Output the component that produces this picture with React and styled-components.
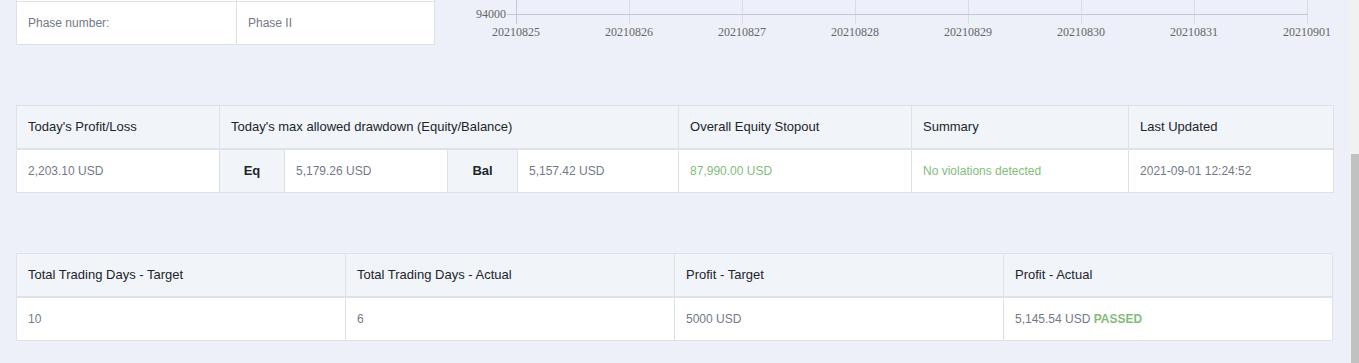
import React from "react";
import styled, { createGlobalStyle } from "styled-components";

const Global = createGlobalStyle`
  html, body { margin: 0; padding: 0; background: #edf0f8; overflow: hidden; }
  body { font-family: "Liberation Sans", Arial, sans-serif; font-size: 12px; }
`;

const C = {
  border: "#dee2e6",
  head: "#f1f4f9",
  dark: "#212529",
  muted: "#747988",
  green: "#85bb7c",
};

const Page = styled.div`
  padding: 0 26px 0 16px;
  box-sizing: border-box;
  width: 100%;
  height: 363px;
`;

const TopRow = styled.div`
  display: flex;
  align-items: flex-start;
  gap: 25px;
  height: 45px;
`;

const InfoCard = styled.div`
  flex: none;
  width: 419px;
  box-sizing: border-box;
  display: grid;
  grid-template-columns: 220px 1fr;
  border: 1px solid ${C.border};
  border-top: 0;
  background: #fff;
`;

const InfoCell = styled.div`
  padding: 14px 11px 12px;
  line-height: 18px;
  color: ${C.muted};
  background: linear-gradient(${C.border}, ${C.border}) 0 1px / 100% 1px no-repeat, #fff;
  border-right: ${(p) => (p.$divider ? `1px solid ${C.border}` : "0")};
`;

const ChartSvg = styled.svg`
  flex: none;
  display: block;
  overflow: visible;
  font-family: "Liberation Serif", "Times New Roman", serif;
  font-size: 12px;
`;

const Section = styled.div`
  margin-top: ${(p) => p.$gap}px;
`;

const Table = styled.table`
  width: 100%;
  border-collapse: collapse;
  table-layout: fixed;
  background: #fff;
`;

const Col = styled.col`
  width: ${(p) => p.$w}px;
`;

const Th = styled.th`
  text-align: left;
  font-weight: 400;
  font-size: 13px;
  color: ${C.dark};
  background: ${C.head};
  padding: 12px 11px;
  line-height: 18px;
  border: 1px solid ${C.border};
  border-bottom: 2px solid ${C.border};
  white-space: nowrap;
`;

const Td = styled.td`
  padding: 12px 11px;
  line-height: 18px;
  color: ${(p) => (p.$green ? C.green : C.muted)};
  border: 1px solid ${C.border};
  white-space: nowrap;
`;

const LabelTd = styled.td`
  padding: 12px 11px;
  line-height: 18px;
  font-size: 13px;
  text-align: center;
  font-weight: 700;
  color: ${C.dark};
  background: ${C.head};
  border: 1px solid ${C.border};
`;

const Passed = styled.span`
  color: ${C.green};
  font-weight: 700;
`;

const Scrollbar = styled.div`
  position: fixed;
  top: 0;
  right: 0;
  width: 10px;
  height: 100vh;
  background: #f1f1f1;
`;

const Thumb = styled.div`
  position: absolute;
  top: 154px;
  left: 2px;
  right: 0;
  bottom: 0;
  background: #c1c1c1;
`;

const dates = ["20210825", "20210826", "20210827", "20210828", "20210829", "20210830", "20210831", "20210901"];

function Chart() {
  const x0 = 56;
  const step = 113;
  return (
    <ChartSvg width="873" height="44" viewBox="0 0 873 44">
      {dates.map((d, i) => (
        <line key={"g" + i} x1={x0 + step * i + 0.5} y1="0" x2={x0 + step * i + 0.5} y2="24" stroke="#d9dce4" strokeWidth="1" />
      ))}
      <line x1={x0} y1="14.5" x2={x0 + step * 7 + 1} y2="14.5" stroke="#c4c8d2" strokeWidth="1" />
      <line x1={x0 + 0.5} y1="0" x2={x0 + 0.5} y2="24" stroke="#c4c8d2" strokeWidth="1" />
      <line x1={x0 - 9} y1="14.5" x2={x0} y2="14.5" stroke="#c4c8d2" strokeWidth="1" />
      <text x={x0 - 10} y="18" textAnchor="end" fill="#666">94000</text>
      {dates.map((d, i) => (
        <text key={"t" + i} x={x0 + step * i} y="36" textAnchor="middle" fill="#666">{d}</text>
      ))}
    </ChartSvg>
  );
}

export default function App() {
  return (
    <>
      <Global />
      <Page>
        <TopRow>
          <InfoCard>
            <InfoCell $divider>Phase number:</InfoCell>
            <InfoCell>Phase II</InfoCell>
          </InfoCard>
          <Chart />
        </TopRow>

        <Section $gap={60}>
          <Table>
            <colgroup>
              <Col $w={203} />
              <Col $w={65} />
              <Col $w={163} />
              <Col $w={70} />
              <Col $w={161} />
              <Col $w={233} />
              <Col $w={217} />
              <Col $w={205} />
            </colgroup>
            <thead>
              <tr>
                <Th>Today's Profit/Loss</Th>
                <Th colSpan={4}>Today's max allowed drawdown (Equity/Balance)</Th>
                <Th>Overall Equity Stopout</Th>
                <Th>Summary</Th>
                <Th>Last Updated</Th>
              </tr>
            </thead>
            <tbody>
              <tr>
                <Td>2,203.10 USD</Td>
                <LabelTd>Eq</LabelTd>
                <Td>5,179.26 USD</Td>
                <LabelTd>Bal</LabelTd>
                <Td>5,157.42 USD</Td>
                <Td $green>87,990.00 USD</Td>
                <Td $green>No violations detected</Td>
                <Td>2021-09-01 12:24:52</Td>
              </tr>
            </tbody>
          </Table>
        </Section>

        <Section $gap={60}>
          <Table>
            <thead>
              <tr>
                <Th>Total Trading Days - Target</Th>
                <Th>Total Trading Days - Actual</Th>
                <Th>Profit - Target</Th>
                <Th>Profit - Actual</Th>
              </tr>
            </thead>
            <tbody>
              <tr>
                <Td>10</Td>
                <Td>6</Td>
                <Td>5000 USD</Td>
                <Td>
                  5,145.54 USD <Passed>PASSED</Passed>
                </Td>
              </tr>
            </tbody>
          </Table>
        </Section>
      </Page>
      <Scrollbar>
        <Thumb />
      </Scrollbar>
    </>
  );
}
